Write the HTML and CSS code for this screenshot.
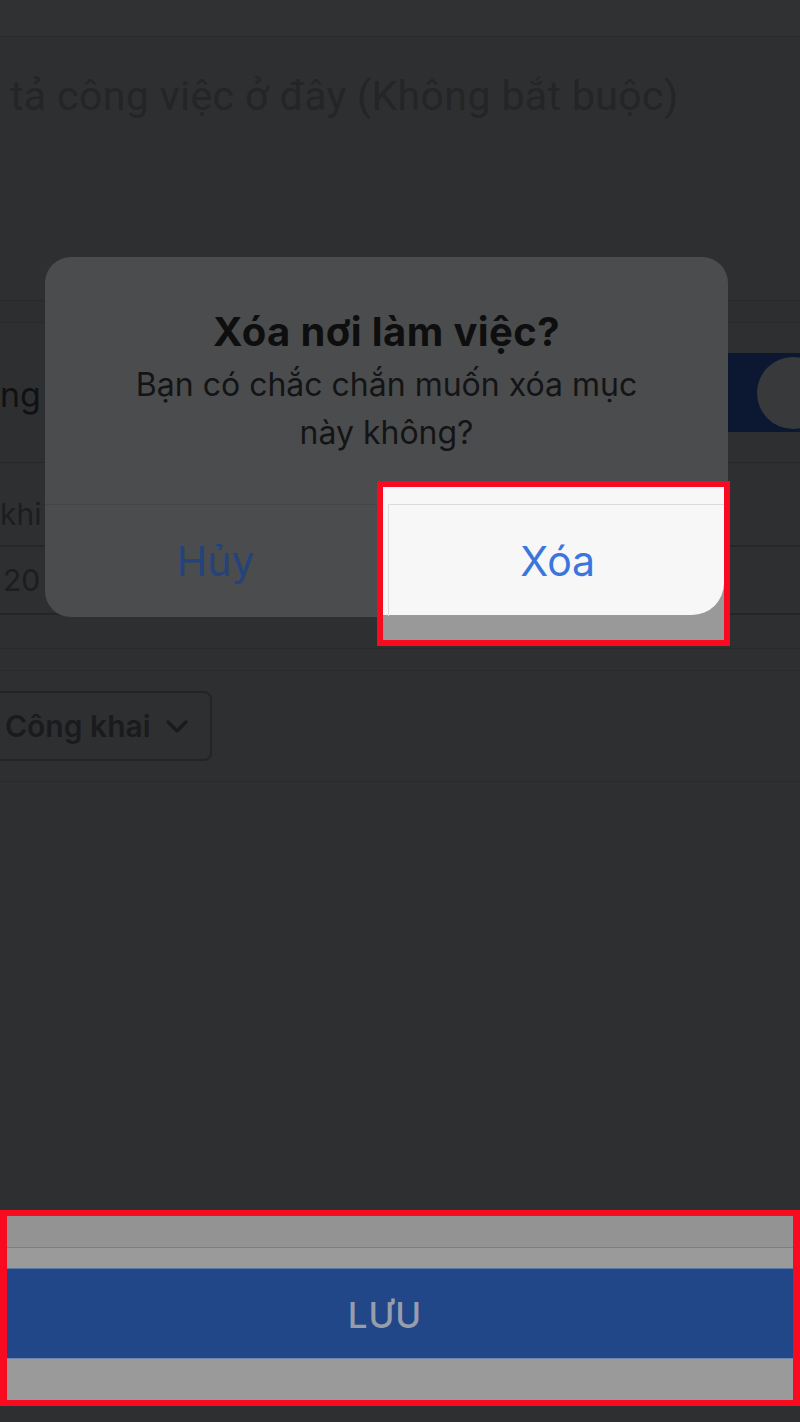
FILE: index.html
```html
<!DOCTYPE html>
<html lang="vi">
<head>
<meta charset="utf-8">
<title>Xóa nơi làm việc</title>
<link rel="stylesheet" href="styles.css">
</head>
<body>
<div class="page">
  <div class="topbar"></div>
  <div class="desc"><span class="desc-text">tả công việc ở đây (Không bắt buộc)</span></div>
  <div class="band"></div>
  <div class="row-toggle">
    <span class="row-label big">ng</span>
    <div class="toggle"><div class="knob"></div></div>
  </div>
  <div class="row-khi"><span class="row-label">khi</span></div>
  <div class="row-input"><span class="row-label">20</span></div>
  <div class="band2"></div>
  <div class="row-select">
    <div class="select">
      <span class="select-text">Công khai</span>
      <svg class="chev" width="22" height="14" viewBox="0 0 22 14"><path d="M2 2 L11 11 L20 2" fill="none" stroke="#1a1b1d" stroke-width="3.2" stroke-linecap="round" stroke-linejoin="round"/></svg>
    </div>
  </div>
  <div class="spacer"></div>
  <div class="footer">
    <div class="f-top"></div>
    <div class="f-mid"></div>
    <div class="f-btn">LƯU</div>
    <div class="f-bot"></div>
  </div>
  <div class="f-under"></div>
</div>

<div class="dialog">
  <div class="d-body">
    <div class="d-title">Xóa nơi làm việc?</div>
    <div class="d-msg">Bạn có chắc chắn muốn xóa mục<br>này không?</div>
  </div>
  <div class="d-actions">
    <div class="d-btn cancel">Hủy</div>
    <div class="d-btn confirm">
      <div class="hl"><div class="hl-white"><div class="hl-inner"></div></div></div>
      <span class="confirm-text">Xóa</span>
    </div>
  </div>
</div>
</body>
</html>
```

FILE: styles.css
```css
html, body {
  margin: 0;
  padding: 0;
}
body {
  width: 800px;
  height: 1422px;
  overflow: hidden;
  background: #2e2f31;
  font-family: Inter, Roboto, "Noto Sans", sans-serif;
  position: relative;
}
.page {
  display: flex;
  flex-direction: column;
  height: 1422px;
}
.topbar {
  height: 36px;
  background: #303133;
  border-bottom: 1px solid #28292b;
  flex: none;
}
.desc {
  height: 263px;
  flex: none;
  overflow: hidden;
  padding-left: 10px;
  box-sizing: border-box;
  padding-top: 34px;
}
.desc-text {
  display: inline-block;
  white-space: nowrap;
  font-family: Roboto, sans-serif;
  font-size: 41px;
  letter-spacing: 0.4px;
  color: #242527;
  line-height: 50px;
}
.band {
  height: 21px;
  flex: none;
  border-top: 1px solid #28292b;
  border-bottom: 1px solid #29292b;
  background: #2d2e30;
}
.row-toggle {
  height: 139px;
  flex: none;
  display: flex;
  align-items: center;
  justify-content: space-between;
  border-bottom: 1px solid #27282a;
  overflow: hidden;
}
.row-label {
  font-size: 30px;
  color: #1c1d1f;
  white-space: nowrap;
}
.row-label.big {
  font-size: 34px;
  color: #111113;
  margin-top: 4px;
}
.toggle {
  width: 160px;
  height: 79px;
  border-radius: 40px;
  background: #0c1831;
  margin-right: -38px;
  display: flex;
  align-items: center;
  justify-content: flex-end;
  padding-right: 5px;
  box-sizing: border-box;
}
.knob {
  width: 72px;
  height: 72px;
  border-radius: 50%;
  background: #38393b;
  margin-right: 4px;
}
.row-khi {
  height: 84px;
  flex: none;
  display: flex;
  align-items: flex-end;
  padding-bottom: 13px;
  box-sizing: border-box;
  border-bottom: 2px solid #262729;
}
.row-input {
  height: 68px;
  flex: none;
  display: flex;
  align-items: center;
  padding-left: 3px;
  box-sizing: border-box;
  border-bottom: 2px solid #242527;
}
.band2 {
  height: 21px;
  flex: none;
  margin-top: 33px;
  border-top: 1px solid #29292b;
  border-bottom: 1px solid #29292b;
}
.row-select {
  height: 111px;
  flex: none;
  display: flex;
  align-items: center;
  border-bottom: 1px solid #28292b;
  box-sizing: border-box;
}
.select {
  margin-left: -10px;
  width: 222px;
  height: 70px;
  border: 2px solid #232426;
  border-radius: 8px;
  box-sizing: border-box;
  display: flex;
  align-items: center;
  padding-left: 13px;
  gap: 15px;
}
.select-text {
  font-size: 30px;
  font-weight: 600;
  color: #1a1b1d;
  white-space: nowrap;
}
.chev {
  margin-top: 2px;
}
.spacer {
  flex: 1;
}
.footer {
  height: 196px;
  flex: none;
  border: 6px solid #f80b21;
  border-left-width: 7px;
  border-right-width: 7px;
  box-sizing: border-box;
  display: flex;
  flex-direction: column;
}
.f-top {
  height: 31px;
  background: #939393;
  border-bottom: 1px solid #7e7e7e;
}
.f-mid {
  height: 20px;
  background: #9a9a9a;
}
.f-btn {
  height: 91px;
  background: #214789;
  border-top: 1px solid #5e78a6;
  border-bottom: 1px solid #6d84ac;
  box-sizing: border-box;
  display: flex;
  align-items: center;
  justify-content: center;
  color: #979eab;
  font-size: 35px;
  font-weight: 500;
  letter-spacing: 1px;
  padding-right: 30px;
  padding-top: 2px;
}
.f-bot {
  flex: 1;
  background: #9a9a9a;
}
.f-under {
  height: 16px;
  flex: none;
}

/* dialog overlay */
.dialog {
  position: absolute;
  left: 45px;
  top: 257px;
  width: 683px;
  height: 360px;
  border-radius: 26px;
  background: #4b4c4e;
  display: flex;
  flex-direction: column;
}
.d-body {
  height: 248px;
  border-bottom: 1px solid #444547;
  display: flex;
  flex-direction: column;
  align-items: center;
  padding-top: 50px;
  box-sizing: border-box;
  text-align: center;
}
.d-title {
  font-size: 40px;
  font-weight: 700;
  color: #0e0e0f;
  line-height: 50px;
  letter-spacing: 0.4px;
}
.d-msg {
  font-size: 32px;
  color: #141415;
  line-height: 48px;
  margin-top: 4px;
}
.d-actions {
  flex: 1;
  display: flex;
}
.d-btn {
  flex: 1;
  display: flex;
  align-items: center;
  justify-content: center;
  font-size: 41px;
  position: relative;
}
.cancel {
  color: #24437b;
}
.confirm {
  color: #3a76dc;
}
.confirm-text {
  position: relative;
  margin-left: 1px;
}
.hl {
  position: absolute;
  left: -10px;
  top: -24px;
  right: -2px;
  bottom: -29px;
  border: 6px solid #f80b21;
  background: #999999;
}
.hl-white {
  height: 128px;
  background: #f7f7f8;
  border-bottom-right-radius: 32px;
  padding-top: 17px;
  box-sizing: border-box;
}
.hl-inner {
  height: 100%;
  margin-left: 5px;
  border-top: 1px solid #dadade;
  border-left: 1px solid #dcdce0;
}
```
